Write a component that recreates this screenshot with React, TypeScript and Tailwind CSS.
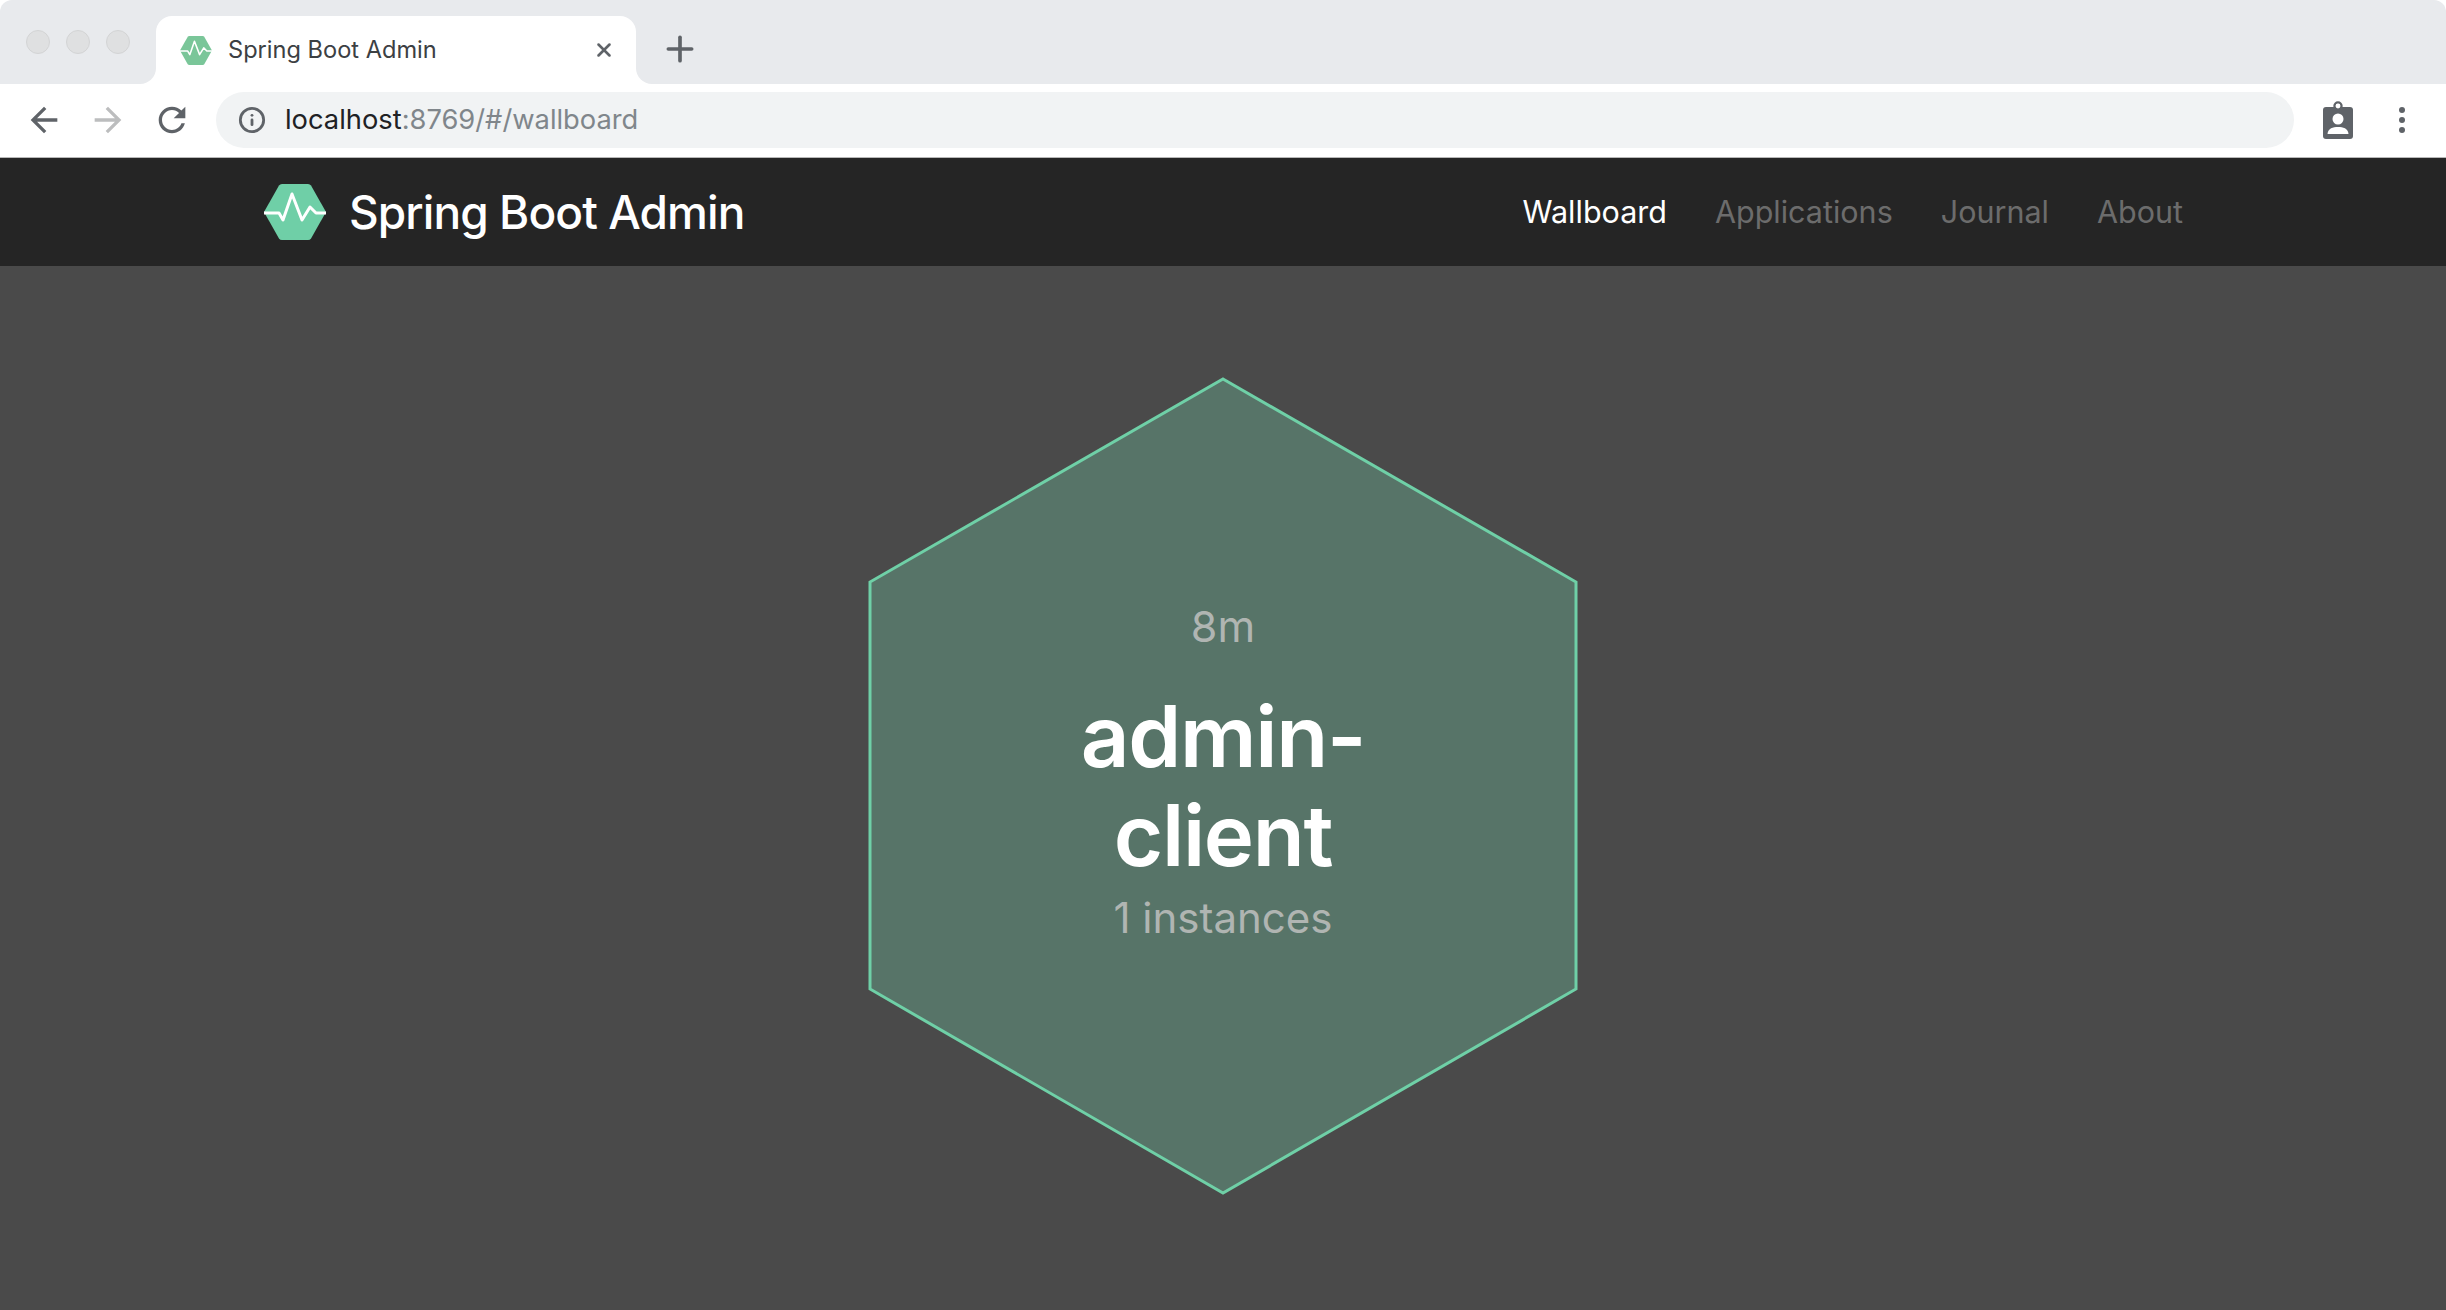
import { Info, Plus, X } from "lucide-react"

const NAV_ITEMS = [
  { label: "Wallboard", active: true },
  { label: "Applications", active: false },
  { label: "Journal", active: false },
  { label: "About", active: false },
]

function Logo({ className, fill, line }: { className: string; fill: string; line: string }) {
  return (
    <svg viewBox="0 0 62 56" className={className}>
      <path d="M0 28 L15 1.5 Q16 0 18 0 L44 0 Q46 0 47 1.5 L62 28 L47 54.5 Q46 56 44 56 L18 56 Q16 56 15 54.5 Z" fill={fill} />
      <path
        d="M0 29 H15 L19 36 L28 10 L38 36 L46 23 L52 29 H62"
        fill="none"
        stroke={line}
        strokeWidth="3"
        strokeLinejoin="round"
      />
    </svg>
  )
}

function ToolbarIcon({ d, color }: { d: string; color: string }) {
  return (
    <svg viewBox="0 0 24 24" className="h-10 w-10" fill={color}>
      <path d={d} />
    </svg>
  )
}

function BadgeIcon() {
  return (
    <svg viewBox="0 0 30 38" className="h-[38px] w-[30px]">
      <circle cx="15" cy="5" r="3.5" fill="none" stroke="#5f6368" strokeWidth="2.4" />
      <rect x="0" y="6" width="30" height="32" rx="3" fill="#5f6368" />
      <circle cx="15" cy="5" r="2.4" fill="#fff" />
      <circle cx="15" cy="18" r="5.5" fill="#fff" />
      <path d="M4.5 33 C5 27 10 26 15 26 C20 26 25 27 25.5 33 Z" fill="#fff" />
    </svg>
  )
}

export default function App() {
  return (
    <div className="flex h-screen flex-col overflow-hidden bg-[#4a4a4a] font-['Inter',sans-serif]">
      <div className="flex h-[84px] shrink-0 bg-white">
        <div className="flex w-[156px] items-center gap-4 rounded-tl-[12px] rounded-br-[16px] bg-[#e8eaed] pl-[26px]">
          {[0, 1, 2].map((i) => (
            <span key={i} className="h-6 w-6 rounded-full border border-[#d3d4d5] bg-[#dfe0e1]" />
          ))}
        </div>
        <div className="bg-[#e8eaed] pt-4">
          <div className="flex h-[68px] w-[480px] items-center rounded-t-[16px] bg-white pl-6 pr-[21px]">
            <Logo className="h-[29px] w-8" fill="#7ac699" line="#ffffff" />
            <span className="ml-[16px] flex-1 text-[23.6px] leading-none text-[#3c4043]">Spring Boot Admin</span>
            <X className="h-[22px] w-[22px] text-[#5f6368]" strokeWidth={2.8} />
          </div>
        </div>
        <div className="flex flex-1 items-center rounded-tr-[12px] rounded-bl-[16px] bg-[#e8eaed] pl-6 pt-[13px]">
          <Plus className="h-10 w-10 text-[#5f6368]" strokeWidth={2.2} />
        </div>
      </div>

      <div className="flex h-[74px] shrink-0 items-center gap-6 border-b-[1px] border-[#b8b8b8] bg-white pb-[1px] pl-6">
        <ToolbarIcon color="#5f6368" d="M20 11H7.83l5.59-5.59L12 4l-8 8 8 8 1.41-1.41L7.83 13H20v-2z" />
        <ToolbarIcon color="#bcbdbe" d="M4 11h12.17l-5.59-5.59L12 4l8 8-8 8-1.41-1.41L16.17 13H4v-2z" />
        <ToolbarIcon
          color="#5f6368"
          d="M17.65 6.35C16.2 4.9 14.21 4 12 4c-4.42 0-7.99 3.58-7.99 8s3.57 8 7.99 8c3.73 0 6.84-2.55 7.73-6h-2.08c-.82 2.33-3.04 4-5.65 4-3.31 0-6-2.69-6-6s2.69-6 6-6c1.66 0 3.14.69 4.22 1.78L13 11h7V4l-2.35 2.35z"
        />
        <div className="flex h-14 w-[2078px] items-center rounded-full bg-[#f1f3f4] pl-[22px]">
          <Info className="h-7 w-7 text-[#5f6368]" strokeWidth={2.4} />
          <span className="ml-[19px] text-[27.3px] leading-none text-[#202124]">
            localhost<span className="text-[#80868b]">:8769/#/wallboard</span>
          </span>
        </div>
        <div className="ml-[5px]">
          <BadgeIcon />
        </div>
        <div className="ml-[22px] flex flex-col gap-1">
          {[0, 1, 2].map((i) => (
            <span key={i} className="h-[6px] w-[6px] rounded-full bg-[#5f6368]" />
          ))}
        </div>
      </div>

      <nav className="flex h-[108px] shrink-0 items-center bg-[#252525] pl-[264px] pr-[263px]">
        <Logo className="h-14 w-[62px]" fill="#6fcfa7" line="#ffffff" />
        <span className="ml-[23px] flex-1 text-[46px] font-medium leading-none tracking-[-0.02em] text-white">
          Spring Boot Admin
        </span>
        <div className="flex items-center gap-12">
          {NAV_ITEMS.map((item) => (
            <a key={item.label} className={`text-[30.5px] leading-none ${item.active ? "text-white" : "text-[#6c6c6c]"}`}>
              {item.label}
            </a>
          ))}
        </div>
      </nav>

      <main className="flex flex-1 justify-center pt-[111px]">
        <div className="relative h-[818px] w-[710px]">
          <svg viewBox="0 0 710 818" className="h-full w-full">
            <polygon points="355,2 708,205 708,612 355,816 2,612 2,205" fill="#577468" stroke="#6fd0a7" strokeWidth="3" />
          </svg>
          <div className="absolute inset-0 flex flex-col items-center pt-[224px] text-center">
            <span className="text-[43px] leading-[50px] text-[#b0b5b2]">8m</span>
            <h1 className="mt-[36px] w-[320px] text-[85px] font-semibold leading-[99px] tracking-[-0.015em] text-white">admin-client</h1>
            <span className="mt-[8px] text-[42px] leading-[50px] text-[#b0b5b2]">1 instances</span>
          </div>
        </div>
      </main>
    </div>
  )
}
